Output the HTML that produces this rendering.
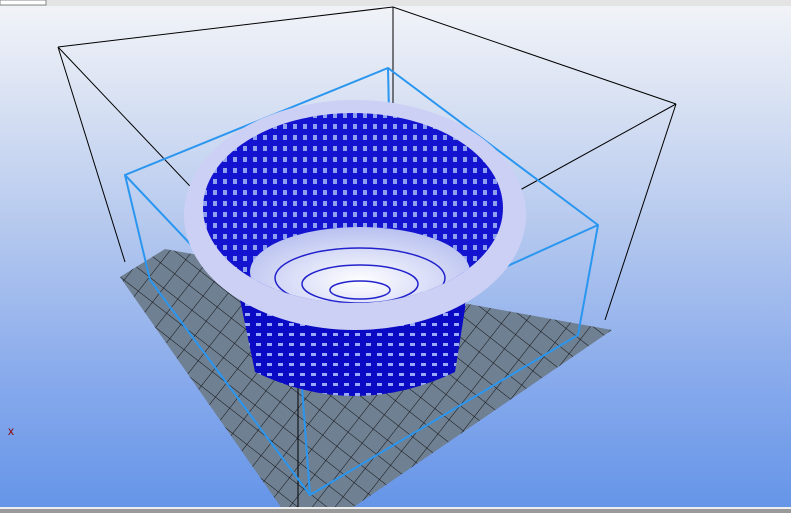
<!DOCTYPE html><html><head><style>body{margin:0;width:791px;height:513px;overflow:hidden;background:linear-gradient(#f2f4f8 0%,#dfe6f4 15%,#b4c8ee 45%,#86a9ec 75%,#6494e8 100%)}svg{position:absolute;left:0;top:0}</style></head><body>
<svg width="791" height="513" viewBox="0 0 791 513">
<defs>
<pattern id="g" width="18" height="18" patternUnits="userSpaceOnUse" patternTransform="rotate(38)"><rect width="18" height="18" fill="#6f8093"/><path d="M0 0H18M0 0V18" stroke="#111" stroke-width="1"/></pattern>
<pattern id="m" width="10" height="11" patternUnits="userSpaceOnUse"><rect width="10" height="11" fill="#1414d0"/><rect x="3" y="3" width="4" height="5" fill="#8ea0f0"/></pattern>
<pattern id="m2" width="11" height="10" patternUnits="userSpaceOnUse"><rect width="11" height="10" fill="#0a0ac4"/><rect x="3" y="3" width="5" height="3" fill="#9aa8ff"/></pattern>
<radialGradient id="f" cx=".5" cy=".6" r=".6"><stop offset="0" stop-color="#ffffff"/><stop offset="1" stop-color="#b8c0f0"/></radialGradient>
<clipPath id="c"><ellipse cx="353" cy="208" rx="150" ry="95"/></clipPath>
</defs>
<rect x="0" y="0" width="791" height="6" fill="#e4e4e4"/><rect x="0" y="0" width="46" height="5" fill="#fff" stroke="#888"/>
<polygon points="120,277 165,249 612,330 345,513 285,513" fill="url(#g)"/>
<g stroke="#000" fill="none" stroke-width="1">
<path d="M58,47 L393,7 L676,104 M393,7 V250 M58,47 L125,262 M58,47 L298,300 M676,104 L605,320 M676,104 L520,190 M298,300 V508"/>
</g>
<g stroke="#2a96f0" fill="none" stroke-width="2">
<path d="M125,175 L388,68 L598,225 L578,335 L310,495 L150,280 Z M125,175 L150,280 M388,68 L392,250 M598,225 L300,360 L125,175 M300,360 L310,495"/>
</g>
<path d="M238,290 L468,290 L455,372 Q355,420 255,372 Z" fill="url(#m2)"/>
<ellipse cx="355" cy="215" rx="171" ry="115" fill="#ccd0f5"/>
<ellipse cx="353" cy="208" rx="150" ry="95" fill="url(#m)"/>
<g clip-path="url(#c)">
<ellipse cx="360" cy="272" rx="110" ry="45" fill="url(#f)"/>
<g stroke="#2222cc" fill="none" stroke-width="1.5"><ellipse cx="360" cy="278" rx="85" ry="30"/><ellipse cx="360" cy="284" rx="58" ry="19"/><ellipse cx="360" cy="290" rx="30" ry="9"/></g>
</g>
<rect x="0" y="507" width="791" height="6" fill="#9a9a9a"/><rect x="0" y="507" width="791" height="2" fill="#eee"/>
<text x="8" y="435" fill="#8b0000" font-size="12" font-family="Liberation Sans,sans-serif">x</text>
</svg></body></html>
